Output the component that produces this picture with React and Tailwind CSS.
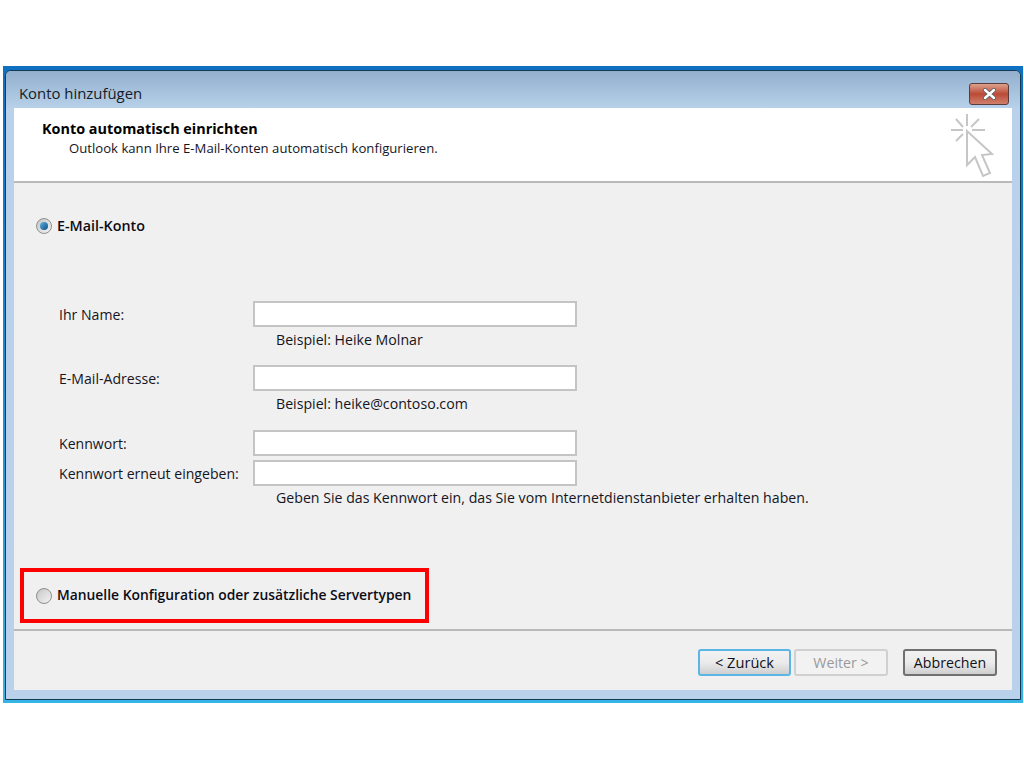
function Radio({ checked }) {
  return (
    <span className="w-[16px] h-[16px] rounded-full border border-[#8e8f8f] bg-gradient-to-br from-[#c4c4c4] to-[#f4f4f4] flex items-center justify-center shrink-0">
      {checked ? (
        <span className="w-[8px] h-[8px] rounded-full bg-gradient-to-br from-[#5fb4e4] to-[#0c4d82]" />
      ) : (
        <span className="w-[10px] h-[10px] rounded-full bg-gradient-to-br from-[#d0d0d0] to-[#ececec]" />
      )}
    </span>
  );
}
function Field({ label, hint, mt, hintCls }) {
  return (
    <div className={mt}>
      <div className="flex items-center h-[26px] pl-[45px]">
        <span className="w-[194px] shrink-0 mt-[2px] text-[14.1px] text-[#15151f] whitespace-nowrap">{label}</span>
        <div className="w-[324px] h-[26px] bg-white border-2 border-[#c3c4c6]" />
      </div>
      {hint && <div className={"pl-[262px] h-[22px] leading-[22px] text-[14.17px] text-[#15151f] whitespace-nowrap " + (hintCls || "mt-[2px]")}>{hint}</div>}
    </div>
  );
}
function Btn({ children, cls }) {
  return (
    <div className={"h-[27px] rounded-[3px] flex items-center justify-center " + cls}>{children}</div>
  );
}
export default function App() {
  return (
    <div className="w-[1024px] h-[768px] bg-white overflow-hidden pt-[66px] font-['Open_Sans','Noto_Sans',sans-serif]">
      <div className="h-[637px] ml-[3px] mr-[1px] bg-gradient-to-b from-[#0f6fc0] via-[#1c8ed0] to-[#35b4e6] pt-[4px] px-[1px] pb-[3px]">
        <div className="h-full ml-[1px] mr-[1px] border border-[#123a52] rounded-t-[6px] bg-[#b9d1ea] flex flex-col pb-[9px] overflow-hidden">
          <div className="h-[37px] shrink-0 px-[8px] flex items-center justify-between text-[14.9px] text-[#141c26] bg-gradient-to-b from-[#93afcd] to-[#b7d1ea]">
            <span className="pl-[5px] mt-[7px]">Konto hinzufügen</span>
            <div className="w-[40px] h-[22px] mt-[8px] mr-[3px] rounded-[3px] border border-[#5a3c3c] bg-gradient-to-b from-[#dca08e] via-[#b94a36] to-[#cf7f6a] flex items-center justify-center">
              <svg width="17" height="12" viewBox="0 0 17 12"><path d="M4 2 L13 10 M13 2 L4 10" stroke="#5c6068" strokeWidth="4" strokeLinecap="round" /><path d="M4 2 L13 10 M13 2 L4 10" stroke="#fff" strokeWidth="2.4" strokeLinecap="round" /></svg>
            </div>
          </div>
          <div className="flex-1 mx-[8px] bg-[#f0f0f0] flex flex-col min-h-0">
            <div className="h-[75px] shrink-0 bg-white border-b-2 border-[#b9b9b9] relative pl-[28px] pt-[11px] text-black">
              <div className="text-[14.4px] font-bold leading-[19px]">Konto automatisch einrichten</div>
              <div className="text-[13.15px] leading-[20px] pl-[27px] text-[#15151f]">Outlook kann Ihre E-Mail-Konten automatisch konfigurieren.</div>
              <svg className="absolute right-[16px] top-[4px]" width="48" height="68" viewBox="0 0 48 68" fill="none" stroke="#c6c6c6" strokeWidth="2">
                <path d="M3 18 H15 M24 18 H37 M19 2 V14 M8 7 L15 15 M31 7 L23 15 M8 29 L15 22" />
                <path d="M19 19 L19 53 L27 45 L35 64 L42 61 L34 43 L44 42 Z" fill="#fff" />
              </svg>
            </div>
            <div className="flex-1 flex flex-col min-h-0">
              <div className="flex items-center gap-[5px] pl-[22px] h-[20px] mt-[33px] text-[14.3px] font-semibold text-[#0c0c16]">
                <Radio checked /><span>E-Mail-Konto</span>
              </div>
              <div className="mt-[65px]">
                <Field label="Ihr Name:" hint="Beispiel: Heike Molnar" />
                <Field mt="mt-[14px]" label="E-Mail-Adresse:" hint="Beispiel: heike@contoso.com" />
                <Field mt="mt-[15px]" label="Kennwort:" />
                <Field mt="mt-[4px]" label="Kennwort erneut eingeben:" hint="Geben Sie das Kennwort ein, das Sie vom Internetdienstanbieter erhalten haben." hintCls="mt-[1px]" />
              </div>
              <div className="ml-[6px] mt-[59px] w-[409px] h-[55px] border-[4px] border-[#ff0000] flex items-center gap-[5px] pl-[12px] text-[13.85px] font-semibold text-[#0c0c16] whitespace-nowrap">
                <Radio /><span>Manuelle Konfiguration oder zusätzliche Servertypen</span>
              </div>
              <div className="mt-[6px] flex-1 border-t-2 border-[#b9b9b9] flex items-start justify-end pr-[15px] pt-[18px]">
                <Btn cls="w-[93px] border-2 border-[#5bb6e6] bg-gradient-to-b from-[#f2f2f2] via-[#ebebeb] to-[#cfcfcf] text-[#111120] text-[14.6px]">&lt; Zurück</Btn>
                <Btn cls="w-[94px] ml-[3px] border-2 border-[#d0d0d0] bg-[#f2f2f2] text-[#9a9a9a] text-[14.2px]">Weiter &gt;</Btn>
                <Btn cls="w-[94px] ml-[15px] border-2 border-[#707070] bg-gradient-to-b from-[#f2f2f2] via-[#ebebeb] to-[#cfcfcf] text-[#111120] text-[14.2px]">Abbrechen</Btn>
              </div>
            </div>
          </div>
        </div>
      </div>
    </div>
  );
}
